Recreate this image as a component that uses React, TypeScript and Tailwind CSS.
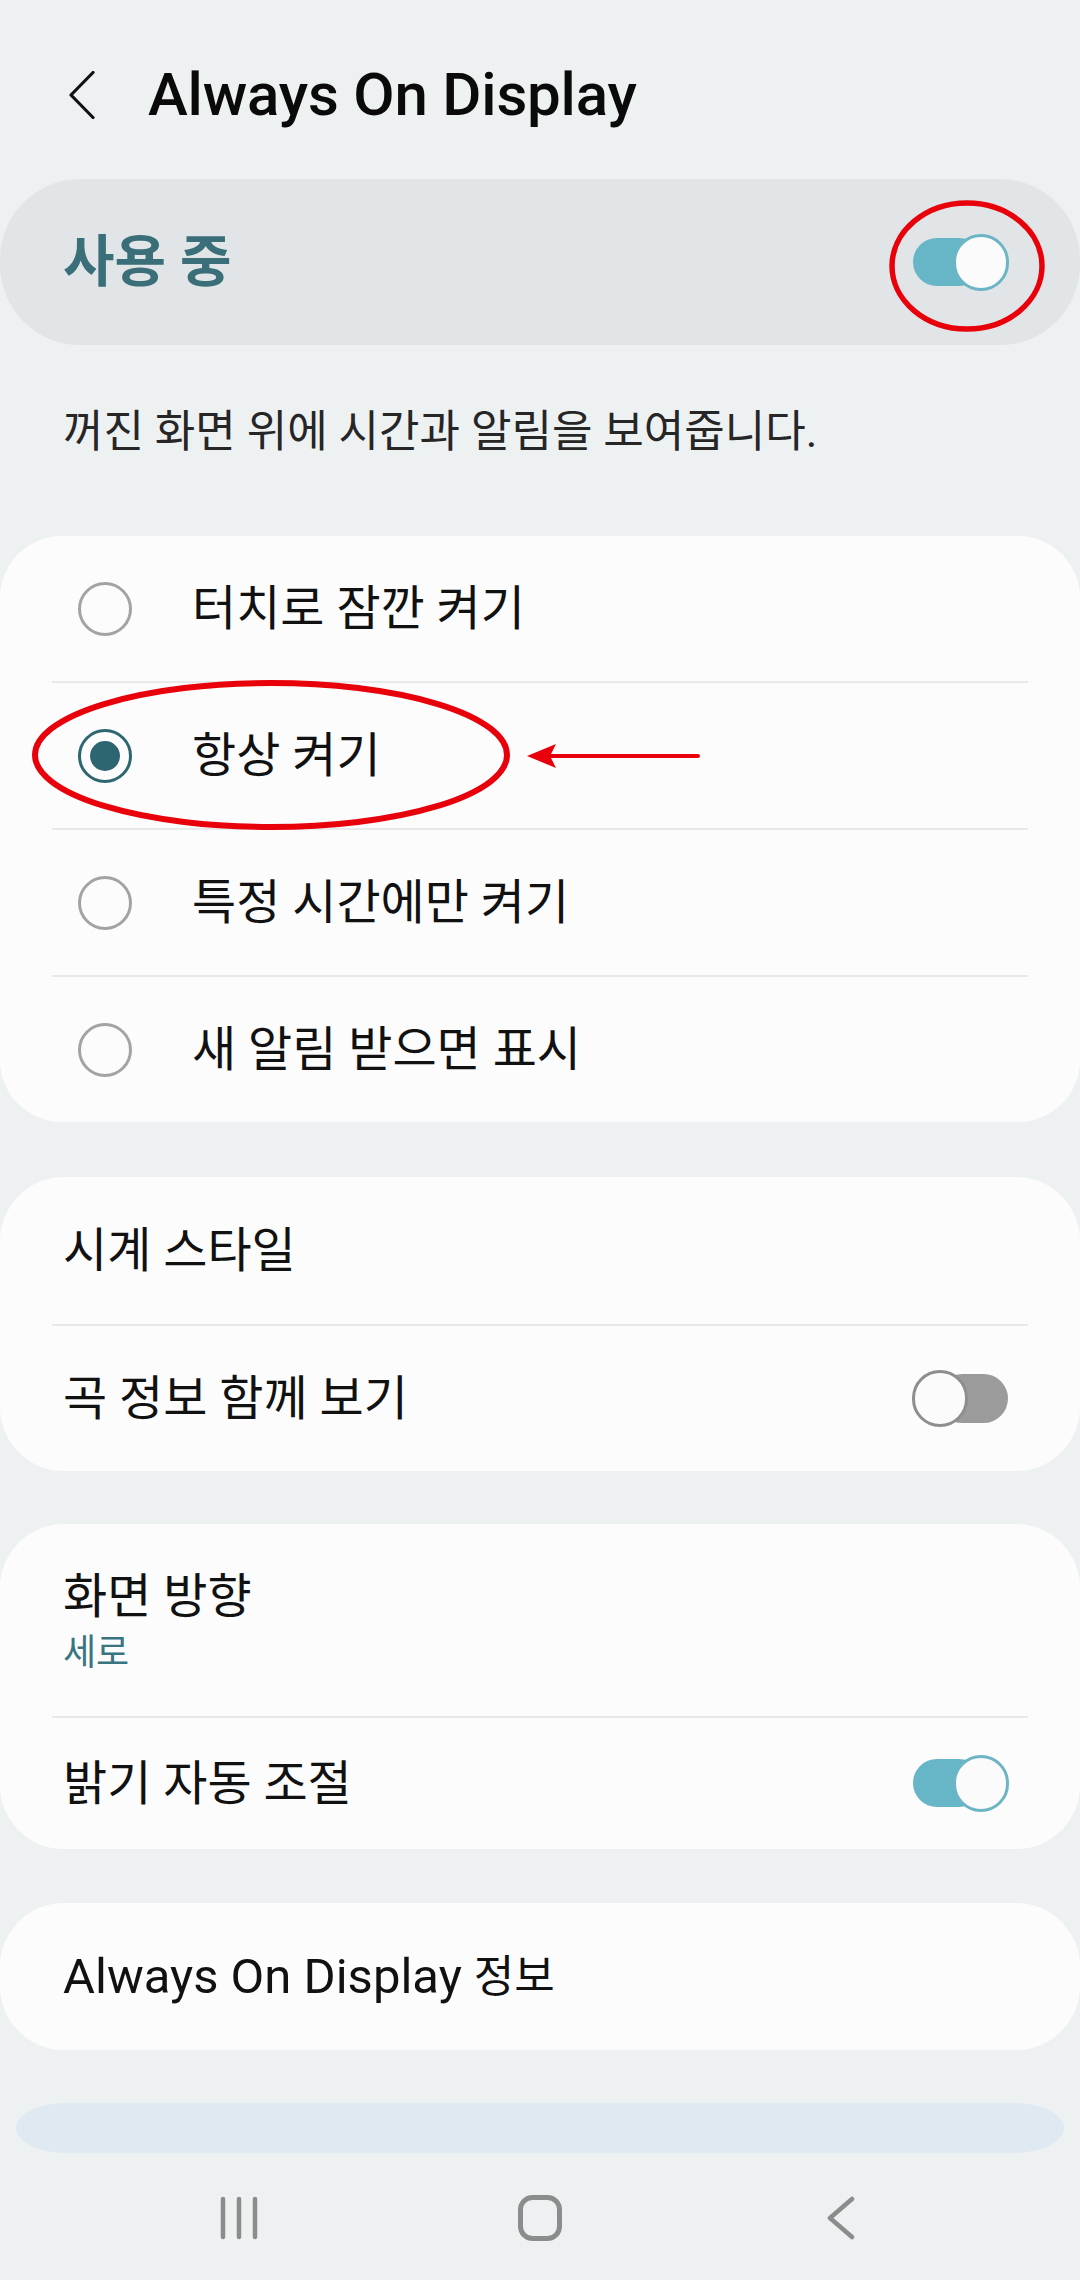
import React from 'react';

const font = "font-[Roboto,'Noto_Sans_CJK_KR',sans-serif]";

const Toggle = ({ on }: { on: boolean }) =>
  on ? (
    <div className="relative w-[96px] h-[57px] shrink-0">
      <div className="absolute left-0 top-[4px] w-[70px] h-[48px] rounded-full bg-[#66b6c8]" />
      <div className="absolute right-0 top-0 w-[56px] h-[57px] rounded-full border-[3px] border-[#6db5c5] bg-[#fbfbfb]" />
    </div>
  ) : (
    <div className="relative w-[96px] h-[57px] shrink-0">
      <div className="absolute right-0 top-[4px] w-[70px] h-[49px] rounded-full bg-[#9b9b9b]" />
      <div className="absolute left-0 top-0 w-[56px] h-[57px] rounded-full border-[3px] border-[#8e8e8e] bg-[#fbfbfb]" />
    </div>
  );

const Radio = ({ checked }: { checked?: boolean }) =>
  checked ? (
    <div className="w-[54px] h-[54px] rounded-full border-[3px] border-[#2e6671] flex items-center justify-center shrink-0">
      <div className="w-[30px] h-[30px] rounded-full bg-[#2d6570]" />
    </div>
  ) : (
    <div className="w-[54px] h-[54px] rounded-full border-[3px] border-[#a3a3a3] shrink-0" />
  );

const Divider = () => <div className="h-[2px] mx-[52px] bg-[#e8e9ea]" />;

const options = ['터치로 잠깐 켜기', '항상 켜기', '특정 시간에만 켜기', '새 알림 받으면 표시'];

export default function App() {
  return (
    <div className={`relative w-[1080px] h-[2280px] overflow-hidden bg-[#eef1f2] ${font}`}>
      {/* header */}
      <div className="flex items-center h-[60px] mt-[65px] mb-[54px]">
        <svg width="26" height="48" viewBox="0 0 26 48" className="ml-[69px]">
          <polyline points="24,1.5 2,24 24,46.5" fill="none" stroke="#111" strokeWidth="3.2" strokeLinecap="round" strokeLinejoin="round" />
        </svg>
        <div className="ml-[53px] text-[60px] leading-[60px] font-medium text-[#0a0a0a] tracking-[-0.2px]">Always On Display</div>
      </div>

      {/* master switch */}
      <div className="h-[166px] rounded-[80px] bg-[#e1e5e7] flex items-center justify-between pl-[63px] pr-[71px]">
        <div className="text-[56px] leading-[64px] font-bold text-[#3a6e78]">사용 중</div>
        <Toggle on />
      </div>

      <div className="mt-[60px] mb-[77px] pl-[63px] text-[44px] leading-[54px] text-[#262626]">
        꺼진 화면 위에 시간과 알림을 보여줍니다.
      </div>

      {/* mode list */}
      <div className="rounded-[62px] bg-[#fcfcfc]">
        {options.map((o, i) => (
          <React.Fragment key={o}>
            {i > 0 && <Divider />}
            <div className="h-[145px] flex items-center pl-[78px] gap-[60px]">
              <Radio checked={i === 1} />
              <span className="text-[48px] leading-[58px] text-[#111]">{o}</span>
            </div>
          </React.Fragment>
        ))}
      </div>

      {/* clock */}
      <div className="mt-[55px] rounded-[64px] bg-[#fcfcfc]">
        <div className="h-[147px] flex items-center pl-[63px] text-[48px] leading-[58px] text-[#111]">시계 스타일</div>
        <Divider />
        <div className="h-[145px] flex items-center justify-between pl-[63px] pr-[72px]">
          <span className="text-[48px] leading-[58px] text-[#111]">곡 정보 함께 보기</span>
          <Toggle on={false} />
        </div>
      </div>

      {/* screen */}
      <div className="mt-[53px] rounded-[64px] bg-[#fcfcfc]">
        <div className="h-[192px] flex flex-col pt-[44px] pl-[63px]">
          <span className="text-[48px] leading-[58px] text-[#111]">화면 방향</span>
          <span className="mt-[5px] text-[36px] leading-[44px] text-[#3a7480]">세로</span>
        </div>
        <Divider />
        <div className="h-[131px] flex items-center justify-between pl-[63px] pr-[71px]">
          <span className="text-[48px] leading-[58px] text-[#111]">밝기 자동 조절</span>
          <Toggle on />
        </div>
      </div>

      {/* about */}
      <div className="mt-[54px] h-[147px] rounded-[64px] bg-[#fcfcfc] flex items-center pl-[63px] text-[#111]">
        <span className="text-[49px] leading-[58px]">Always On Display</span>
        <span className="ml-[12px] text-[44px] leading-[58px]">정보</span>
      </div>

      {/* partially visible card */}
      <div className="mt-[53px] mx-[16px] h-[50px] rounded-[50px/25px] bg-[#dfe9f2]" />

      {/* navigation bar */}
      <div className="grid grid-cols-3 px-[89px] h-[127px] items-center pt-[3px]">
        <div className="flex justify-center">
          <svg width="40" height="44" viewBox="0 0 40 44">
            <g stroke="#8b8c8c" strokeWidth="4.5" strokeLinecap="round">
              <line x1="4" y1="3" x2="4" y2="41" />
              <line x1="20" y1="3" x2="20" y2="41" />
              <line x1="36" y1="3" x2="36" y2="41" />
            </g>
          </svg>
        </div>
        <div className="flex justify-center">
          <svg width="44" height="46" viewBox="0 0 44 46">
            <rect x="2.5" y="2.5" width="39" height="41" rx="12" fill="none" stroke="#8b8c8c" strokeWidth="5" />
          </svg>
        </div>
        <div className="flex justify-center">
          <svg width="28" height="44" viewBox="0 0 28 44">
            <polyline points="25,3 3,22 25,41" fill="none" stroke="#8b8c8c" strokeWidth="4.5" strokeLinecap="round" strokeLinejoin="round" />
          </svg>
        </div>
      </div>

      {/* red annotations drawn on top of the screenshot */}
      <svg className="absolute inset-0 pointer-events-none" width="1080" height="2280" viewBox="0 0 1080 2280">
        <ellipse cx="967" cy="266" rx="75" ry="63" fill="none" stroke="#e8000a" strokeWidth="5.5" />
        <ellipse cx="271" cy="755" rx="236" ry="72" fill="none" stroke="#e8000a" strokeWidth="6" />
        <line x1="698" y1="756" x2="545" y2="756" stroke="#e8000a" strokeWidth="4" strokeLinecap="round" />
        <polygon points="527,756 556,744 550,756 556,768" fill="#e8000a" />
      </svg>
    </div>
  );
}
